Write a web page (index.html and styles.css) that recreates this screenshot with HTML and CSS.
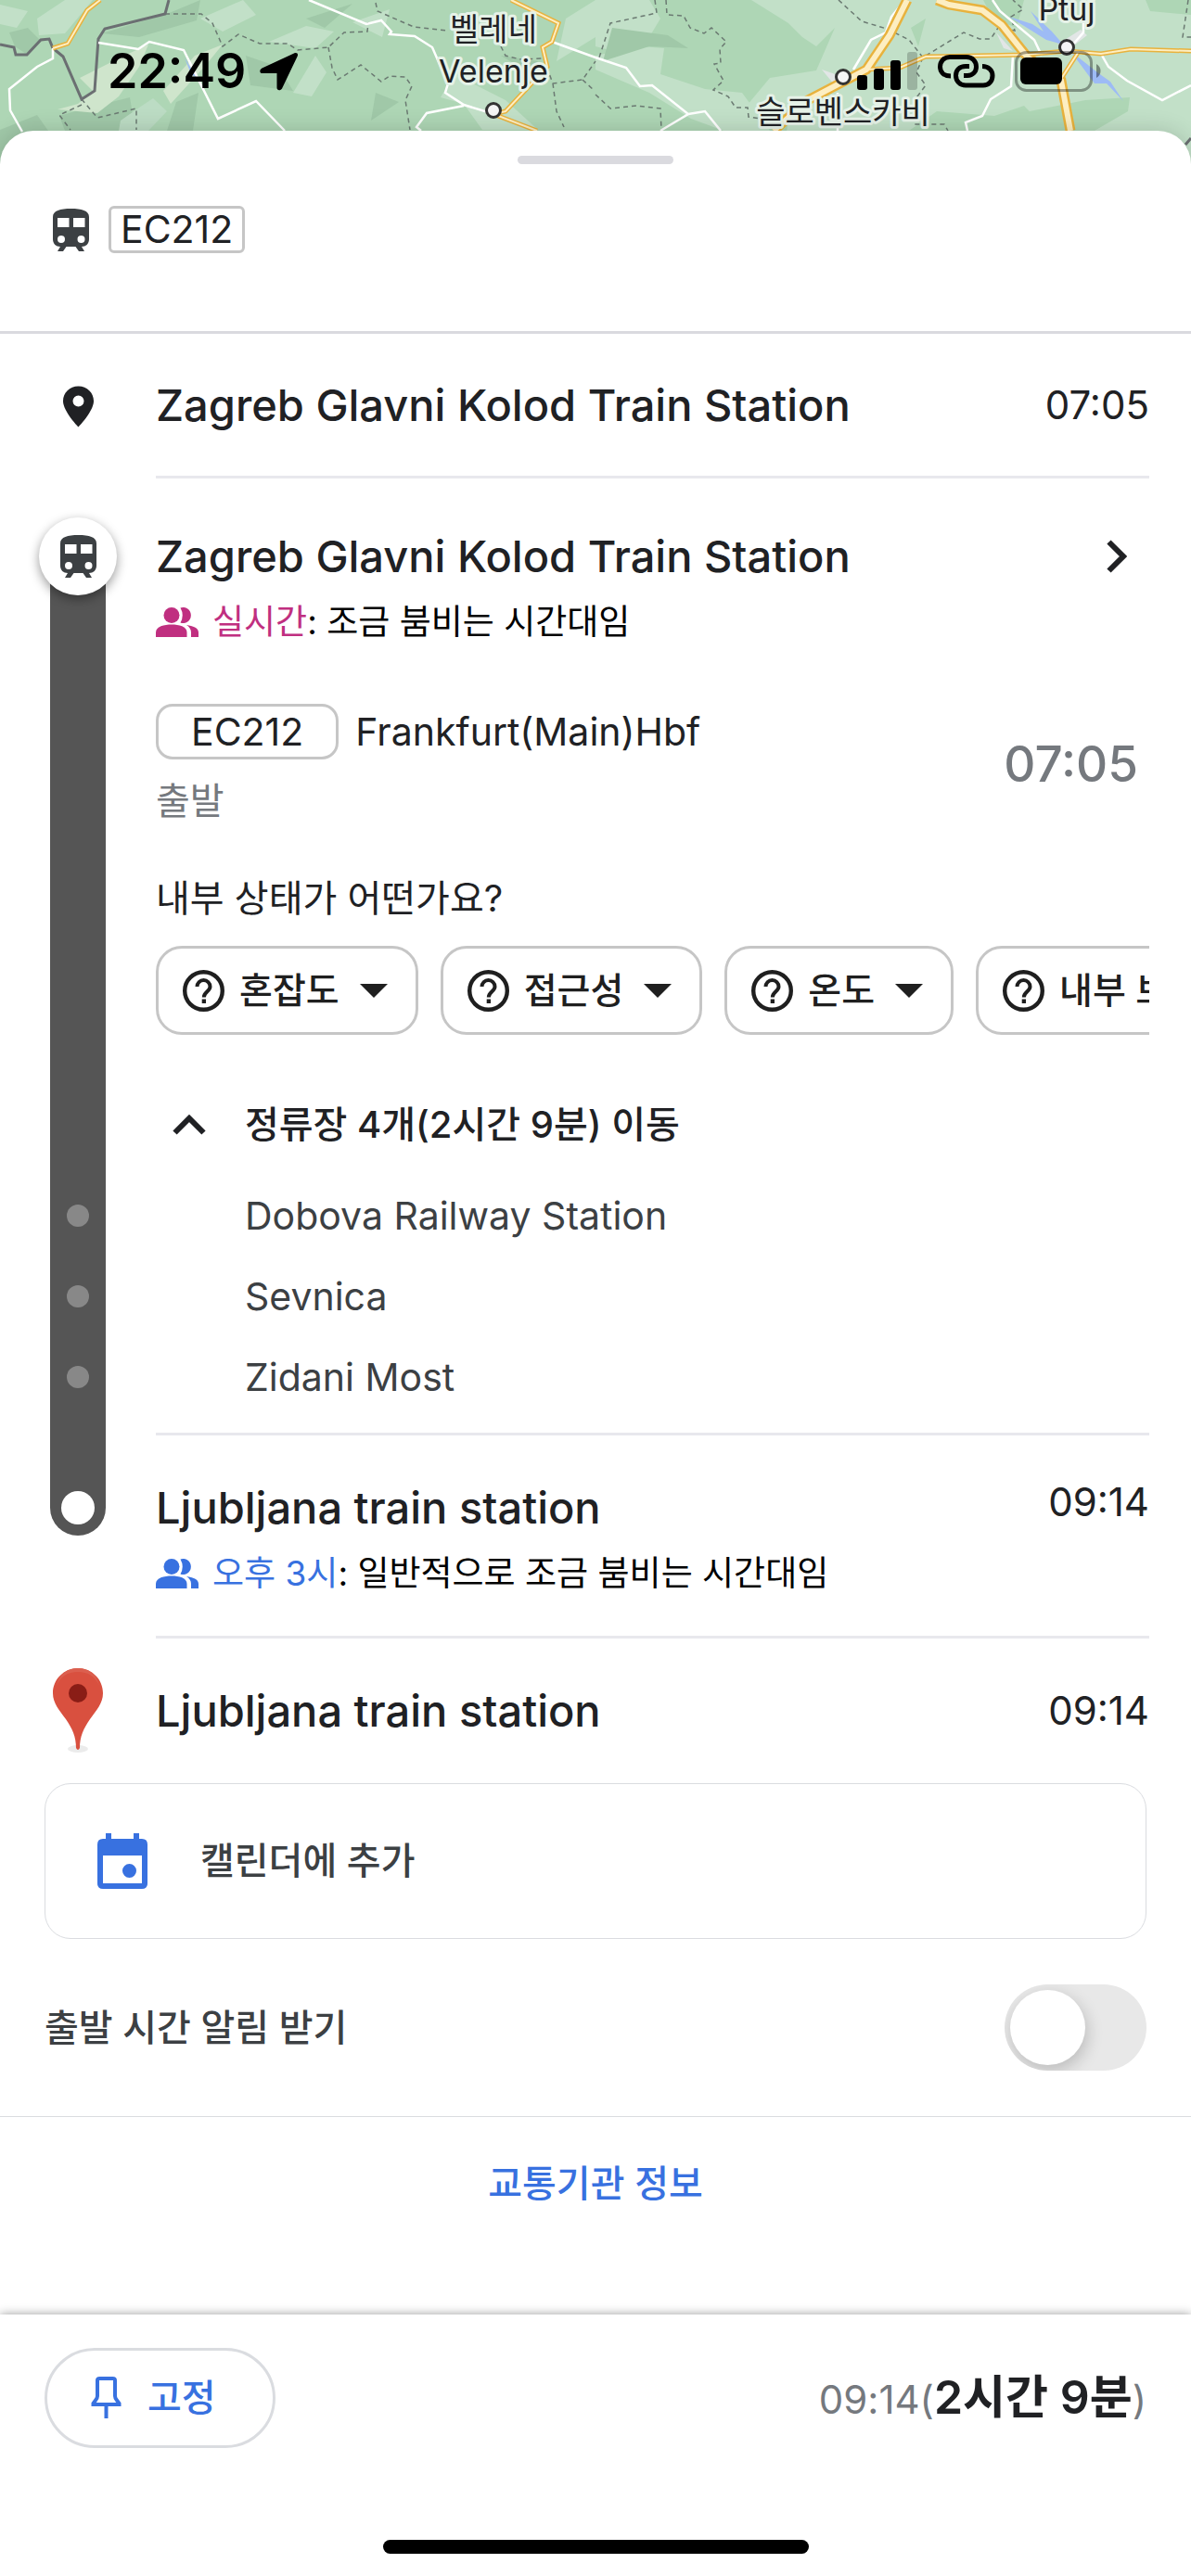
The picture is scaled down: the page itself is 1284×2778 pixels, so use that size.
FILE: index.html
```html
<!DOCTYPE html>
<html lang="ko">
<head>
  <meta charset="UTF-8">
  <meta name="viewport" content="width=device-width, initial-scale=1.0">
  <title>EC212</title>
  <link rel="stylesheet" href="styles.css">
</head>
<body>
  <!-- shared icons -->
  <svg class="sprite" aria-hidden="true">
    <symbol id="train" viewBox="0 0 39 46">
      <path fill-rule="evenodd" d="M19.500 0C8 0 0 2 0 9V33C0 38 3.500 41 8 41L5 46H11L14.500 41H24.500L28 46H34L31 41C35.500 41 39 38 39 33V9C39 2 31 0 19.500 0ZM5 10H17.500V20H5ZM22 10H34.500V20H22ZM9 29A4 4 0 1 1 9 37A4 4 0 1 1 9 29ZM30.500 29A4 4 0 1 1 30.500 37A4 4 0 1 1 30.500 29Z"/>
    </symbol>
    <symbol id="people" viewBox="0 0 46 33">
      <circle cx="17" cy="8.500" r="8.500"/>
      <path d="M0 32V27C0 20.500 9 18.500 17 18.500S33.500 20.500 33.500 27V32Z"/>
      <path d="M26.500 0.500A8.500 8.500 0 1 1 26.500 16.500Q31 8.500 26.500 0.500Z"/>
      <path d="M33 19C40 20 46 22 46 27V32H38V27C38 23.500 36 21 33 19Z"/>
    </symbol>
    <symbol id="help" viewBox="0 0 45 45">
      <circle cx="22.500" cy="22.500" r="20.300" fill="none" stroke="currentColor" stroke-width="4.400"/>
      <path d="M15.500 18A7 7 0 0 1 29.500 18C29.500 23 22.800 23.500 22.800 29.500" fill="none" stroke="currentColor" stroke-width="4"/>
      <rect x="20.700" y="31.500" width="4.300" height="4.500"/>
    </symbol>
  </svg>

  <header class="map">
    <svg class="map-art" viewBox="0 0 1284 190" preserveAspectRatio="xMidYMin slice" aria-hidden="true">
      <rect width="1284" height="190" fill="#aed6b5"/>
      <!-- lowland -->
      <g fill="#c2e0c8">
        <path d="M642 0H700L712 20L700 40L680 60L642 50Z"/>
        <path d="M810 0H1284V190H840L852 118L800 120L830 84L880 76L900 30L880 50L865 40L850 25Z"/>
        <path d="M642 60L690 50L716 52L712 80L760 96L800 100L830 141L780 141L745 128L700 100L642 75Z"/>
        <path d="M490 80L545 108L580 140H520L500 112L475 105Z"/>
        <path d="M0 5L30 12L18 30L0 26ZM40 20L70 0H100L70 36L42 38ZM216 20L262 0L276 16L240 34ZM290 45L330 28L360 34L340 52ZM316 100L340 60L352 78L336 104ZM610 20L642 0V40L600 66ZM380 24L420 10L412 40Z"/>
      </g>
      <g fill="#aed6b5">
        <path d="M1060 0H1104L1096 30L1070 20ZM1235 0H1284V16L1240 12ZM1110 120L1170 108L1218 105L1216 120L1180 141H1100ZM980 141L1010 120L1072 125L1104 114L1130 141ZM982 30L998 20L990 50Z"/>
      </g>
      <g fill="#a0c8a8">
        <path d="M180 15L216 0L212 22L150 40L110 36ZM10 35L30 30L44 44L28 58L16 50ZM88 118L140 105L146 141H70L64 125ZM330 20L380 4L350 30ZM265 60L300 72L316 98L270 92ZM660 30L720 38L742 52L700 50L650 66ZM0 140L40 124L52 141L0 190ZM540 60L580 66L570 78ZM405 100L430 110L400 130ZM190 110L214 100L208 141H180Z"/>
      </g>
      <g fill="#cfe5cc">
        <path d="M86 84L134 60L160 48L150 72L128 104L105 122L62 118L84 112L100 98ZM176 98L210 60L240 48L222 70L184 112Z"/>
        <path d="M150 116L165 106L180 120L160 141H128L130 130Z" fill="#bcdcc4"/>
      </g>
      <g fill="#9dbbf5">
        <path d="M1088 18L1113 26L1146 48L1128 43ZM1111 12L1134 34L1148 50L1130 42ZM1154 55L1183 78L1197 88L1211 109L1193 90L1180 90ZM199 62L212 84L206 80Z"/>
      </g>
      <path d="M886 75L906 82L900 92ZM1140 48L1165 32L1172 38L1154 52ZM1074 35L1092 55L1082 52Z" fill="#e2e6e6"/>
      <!-- admin borders -->
      <g fill="none" stroke="#6b7a72" stroke-width="1.500" stroke-dasharray="5 4">
        <path d="M178 15H217L229 25L240 50L257 37L280 47H310L321 54L354 51L371 35L396 34L397 24"/>
        <path d="M405 3L407 12L446 29L483 33M354 51L358 73L364 86L389 70L411 88L420 82L437 83L444 93L437 108L442 140"/>
        <path d="M88 107L105 127L147 117V140M88 113L64 124L76 140M540 50L545 60L561 64L586 63L596 90L628 86L642 66M596 90L600 120L608 137M628 86L640 97"/>
        <path d="M718 0L719 16L737 17L744 30L759 36L767 30L783 45L776 53L777 68L770 69L780 87L769 97L785 104L793 116H806L807 126L820 128"/>
        <path d="M706 0L708 14L658 25L646 62M642 102L658 117L686 114L712 117L713 140"/>
        <path d="M904 0L929 23L956 31L980 43L995 62L1039 35L1056 42H1068L1076 30L1094 33L1090 18L1103 10L1092 0M995 62L988 78L998 92L986 108V134L1018 134L1022 141M1281 0L1275 40H1284"/>
      </g>
      <path d="M0 48L15 51L17 59H29L44 43L53 42L57 52L68 61L88 107L102 98L106 42L113 31L178 15L182 0M1278 156L1284 149" fill="none" stroke="#6b6f72" stroke-width="3"/>
      <!-- small roads -->
      <g fill="none" stroke="#fff" stroke-width="2.500">
        <path d="M106 46L149 53L161 45L198 54L235 128L276 109L307 141M57 52V63L40 72L10 96L11 119L24 142"/>
        <path d="M333 0L395 26L411 22L422 34L420 37L447 39L466 51L483 90L480 100L500 113L526 121M500 114L460 122L449 137L454 141"/>
        <path d="M595 45L642 62L675 73L690 93L703 92L742 123L712 141M742 123L760 120L777 141"/>
        <path d="M970 7L961 18L955 35L939 43L920 75M903 100V141M1070 0L1078 12L1115 43L1123 60M1092 60L1090 93L1068 107L1059 125L1041 132L1043 141M1187 58L1195 72L1215 87L1253 108L1284 92M1168 20V35L1155 50"/>
      </g>
      <!-- highways: casing, then fill -->
      <g fill="none" stroke="#e8b23d">
        <path stroke-width="5" d="M108 0L94 11L73 47L57 52M551 0L602 25L595 45L585 51L590 72L545 120L532 123L579 141M934 75L970 73L998 61L1105 59L1150 55L1187 58L1219 53L1284 55M1162 57L1144 85"/>
        <path stroke-width="11" d="M978 0L959 38L934 75L871 108L834 141M1010 0L1023 5L1059 11L1080 27L1108 62L1144 87L1154 141"/>
      </g>
      <g fill="none" stroke="#fdeec2">
        <path stroke-width="2" d="M108 0L94 11L73 47L57 52M551 0L602 25L595 45L585 51L590 72L545 120L532 123L579 141M934 75L970 73L998 61L1105 59L1150 55L1187 58L1219 53L1284 55M1162 57L1144 85"/>
        <path stroke-width="6" d="M978 0L959 38L934 75L871 108L834 141M1010 0L1023 5L1059 11L1080 27L1108 62L1144 87L1154 141"/>
      </g>
      <g fill="#f5f5f5" stroke="#333" stroke-width="3">
        <circle cx="532" cy="119" r="7.500"/>
        <circle cx="909" cy="83" r="7.500"/>
        <circle cx="1150" cy="51" r="7.500"/>
      </g>
      <g class="map-label">
        <text x="532" y="44">벨레네</text>
        <text x="532" y="89">Velenje</text>
        <text x="909" y="133">슬로벤스카비</text>
        <text x="1150" y="22">Ptuj</text>
      </g>
    </svg>
    <div class="status-bar">
      <div class="status-left">
        <span class="clock">22:49</span>
        <svg width="42" height="42" viewBox="0 0 42 42"><path d="M37 1.500L2.500 17.500C-0.500 19-0.500 23 3 23H18.500V38.500C18.500 42 22.500 42 24 39.500L40.500 5C42 2 40 0 37 1.500Z"/></svg>
      </div>
      <div class="status-right">
        <svg width="66" height="42" viewBox="0 0 66 42">
          <rect y="25" width="11" height="16" rx="3"/>
          <rect x="18" y="18" width="11" height="23" rx="3"/>
          <rect x="36" y="9" width="11" height="32" rx="3"/>
          <rect x="54" width="11" height="41" rx="3" opacity="0.200"/>
        </svg>
        <svg width="62" height="36" viewBox="0 0 62 36">
          <g fill="none" stroke="#000" stroke-width="5">
            <path d="M14 23C6 23 2.500 18 2.500 13C2.500 7 7 2.500 13 2.500H31C37 2.500 41.500 7 41.500 13C41.500 18 38 22.500 32 22.500H28"/>
            <path d="M48 12.500C55 12.500 59 17 59 22.500C59 28.500 55 33 49 33H30C24 33 19.500 28.500 19.500 22.500C19.500 17 23 12.500 30 12.500H34"/>
          </g>
        </svg>
        <svg width="94" height="44" viewBox="0 0 94 44">
          <rect x="1.500" y="1.500" width="81" height="41" rx="11" fill="none" stroke="#000" stroke-width="3" opacity="0.350"/>
          <rect x="6" y="7" width="45" height="29" rx="6"/>
          <path d="M88 14C94 17 94 26 88 29Z" opacity="0.400"/>
        </svg>
      </div>
    </div>
  </header>

  <main class="sheet">
    <div class="handle"></div>
    <div class="line-header">
      <svg class="icon-train" width="39" height="46"><use href="#train"/></svg>
      <h1 class="line-tag">EC212</h1>
    </div>

    <section class="row">
      <div class="rail-cell">
        <svg width="33" height="45" viewBox="0 0 33 44"><path fill="#202124" fill-rule="evenodd" d="M16.500 0C7 0 0 7 0 16C0 27 16.500 44 16.500 44S33 27 33 16C33 7 26 0 16.500 0ZM16.500 10A6 6 0 1 1 16.500 22A6 6 0 1 1 16.500 10Z"/></svg>
      </div>
      <div class="row-body divided">
        <h2 class="station">Zagreb Glavni Kolod Train Station</h2>
        <time class="time">07:05</time>
      </div>
    </section>

    <section class="leg">
      <div class="rail">
        <div class="badge"><svg class="icon-train" width="39" height="46"><use href="#train"/></svg></div>
        <div class="bar">
          <i class="dot"></i>
          <i class="dot"></i>
          <i class="dot"></i>
          <i class="dot-end"></i>
        </div>
      </div>
      <div class="leg-body">
        <div class="departure divided">
          <a class="station-link" href="#station">
            <h2 class="station">Zagreb Glavni Kolod Train Station</h2>
            <svg width="22" height="36" viewBox="0 0 22 36"><path d="M2.500 2.500L18 18L2.500 33.500" fill="none" stroke="#202124" stroke-width="6"/></svg>
          </a>
          <p class="crowd">
            <svg class="live" width="46" height="33"><use href="#people"/></svg>
            <span><span class="live">실시간</span>: 조금 붐비는 시간대임</span>
          </p>

          <div class="service">
            <div>
              <div class="service-name">
                <span class="service-tag">EC212</span>
                <span>Frankfurt(Main)Hbf</span>
              </div>
              <p class="service-note">출발</p>
            </div>
            <time class="service-time">07:05</time>
          </div>

          <p class="question">내부 상태가 어떤가요?</p>
          <div class="chips">
            <button class="chip"><svg width="45" height="45"><use href="#help"/></svg>혼잡도<i class="caret"></i></button>
            <button class="chip"><svg width="45" height="45"><use href="#help"/></svg>접근성<i class="caret"></i></button>
            <button class="chip"><svg width="45" height="45"><use href="#help"/></svg>온도<i class="caret"></i></button>
            <button class="chip"><svg width="45" height="45"><use href="#help"/></svg>내부 보안<i class="caret"></i></button>
          </div>

          <button class="stops-toggle">
            <svg width="36" height="22" viewBox="0 0 36 22"><path d="M2.500 19.500L18 4L33.500 19.500" fill="none" stroke="#202124" stroke-width="6"/></svg>
            정류장 4개(2시간 9분) 이동
          </button>
          <ul class="stops">
            <li>Dobova Railway Station</li>
            <li>Sevnica</li>
            <li>Zidani Most</li>
          </ul>
        </div>

        <div class="arrival divided">
          <div class="arrival-head">
            <h2 class="station">Ljubljana train station</h2>
            <time class="time">09:14</time>
          </div>
          <p class="crowd">
            <svg class="usual" width="46" height="33"><use href="#people"/></svg>
            <span><span class="usual">오후 3시</span>: 일반적으로 조금 붐비는 시간대임</span>
          </p>
        </div>
      </div>
    </section>

    <section class="row">
      <div class="rail-cell">
        <svg width="54" height="92" viewBox="0 0 54 92">
          <ellipse cx="27" cy="87" rx="11" ry="4" fill="#000" opacity="0.080"/>
          <path d="M27 0C12 0 0 12 0 27C0 38 7 45 14 55C21 65 25 74 25 86Q27 90 29 86C29 74 33 65 40 55C47 45 54 38 54 27C54 12 42 0 27 0Z" fill="#d9503f"/>
          <path d="M4 19C8 9 16 4 27 4S46 9 50 19C47 6 38 0 27 0S7 6 4 19Z" fill="#db5f4f"/>
          <circle cx="27" cy="27" r="10" fill="#8a1d16"/>
        </svg>
      </div>
      <div class="row-body">
        <h2 class="station">Ljubljana train station</h2>
        <time class="time">09:14</time>
      </div>
    </section>

    <button class="calendar">
      <svg width="54" height="60" viewBox="0 0 54 60"><path fill="#3871e0" fill-rule="evenodd" d="M9 0H15V6H39V0H45V6H48Q54 6 54 12V54Q54 60 48 60H6Q0 60 0 54V12Q0 6 6 6H9ZM6 24V54H48V24ZM34.500 33A7.500 7.500 0 1 1 34.500 48A7.500 7.500 0 1 1 34.500 33Z"/></svg>
      캘린더에 추가
    </button>

    <div class="reminder">
      <label for="reminder">출발 시간 알림 받기</label>
      <input class="switch" type="checkbox" id="reminder">
    </div>

    <div class="agency">
      <a href="#agency">교통기관 정보</a>
    </div>
  </main>

  <footer class="footer">
    <div class="footer-row">
      <button class="pin">
        <svg width="33" height="46" viewBox="0 0 33 46"><path fill="none" stroke="#3871e0" stroke-width="4" d="M7 4Q7 2 9.500 2H23.500Q26 2 26 4V21Q26 23 28 25.500L30.500 29V30H2.500V29L5 25.500Q7 23 7 21ZM16.500 30V45"/></svg>
        고정
      </button>
      <p class="eta">09:14(<strong>2시간 9분</strong>)</p>
    </div>
    <div class="home-indicator"></div>
  </footer>
</body>
</html>
```
FILE: styles.css
```css
* {
  box-sizing: border-box;
}
body {
  margin: 0;
  min-height: 100vh;
  display: flex;
  flex-direction: column;
  background-color: #fff;
  color: #202124;
  font-family: Inter, "Noto Sans CJK KR", sans-serif;
  font-size: 40px;
  line-height: 48px;
}
h1, h2, p, ul {
  margin: 0;
  padding: 0;
  font-weight: 400;
}
button {
  font: inherit;
  color: inherit;
  background: none;
  border: none;
  padding: 0;
  cursor: pointer;
}
a {
  color: inherit;
  text-decoration: none;
}
svg {
  flex: none;
  fill: currentColor;
}
.sprite {
  position: absolute;
  width: 0;
  height: 0;
}

/* map and status bar */
.map {
  position: relative;
  height: 190px;
  overflow: hidden;
}
.map-art {
  position: absolute;
  top: 0;
  left: 0;
  width: 100%;
  height: 100%;
}
.map-label {
  font-size: 34px;
  text-anchor: middle;
  fill: #202124;
  stroke: #e6f2e8;
  stroke-width: 6px;
  stroke-linejoin: round;
  paint-order: stroke;
}
.status-bar {
  position: relative;
  display: flex;
  justify-content: space-between;
  align-items: center;
  padding: 47px 96px 0 116px;
  color: #000;
}
.status-left, .status-right {
  display: flex;
  align-items: center;
  gap: 15px;
}
.status-right {
  gap: 21px;
}
.clock {
  font-size: 52px;
  font-weight: 600;
  line-height: 60px;
}

/* sheet */
.sheet {
  position: relative;
  flex: 1;
  margin-top: -49px;
  padding-top: 27px;
  background-color: #fff;
  border-radius: 36px 36px 0 0;
  box-shadow: 0 0 24px rgba(0, 0, 0, 0.16);
}
.handle {
  width: 168px;
  height: 9px;
  margin: 0 auto;
  border-radius: 5px;
  background-color: #dadadf;
}
.line-header {
  display: flex;
  align-items: center;
  gap: 21px;
  padding: 45px 57px 84px;
  border-bottom: 3px solid #dadadf;
}
.icon-train {
  color: #3c4043;
}
.line-tag {
  padding: 0 10px;
  border: 3px solid #c6c6c6;
  border-radius: 6px;
  font-size: 41px;
  line-height: 45px;
}

.row, .leg {
  display: grid;
  grid-template-columns: 168px 1fr;
  padding-right: 45px;
}
.rail-cell {
  display: flex;
  align-items: center;
  justify-content: center;
}
.row-body {
  display: flex;
  align-items: center;
  justify-content: space-between;
  min-height: 156px;
}
.divided {
  border-bottom: 3px solid #e8e8ed;
}
.station {
  font-size: 47px;
  font-weight: 500;
  line-height: 60px;
  white-space: nowrap;
}
.time {
  font-size: 42px;
}

/* train leg */
.rail {
  display: flex;
  flex-direction: column;
  align-items: center;
  padding: 42px 0 111px;
}
.badge {
  display: flex;
  align-items: center;
  justify-content: center;
  width: 84px;
  height: 84px;
  border-radius: 50%;
  background-color: #fff;
  box-shadow: 0 4px 12px rgba(0, 0, 0, 0.4);
  z-index: 1;
}
.bar {
  flex: 1;
  display: flex;
  flex-direction: column;
  justify-content: flex-end;
  align-items: center;
  gap: 63px;
  width: 60px;
  margin-top: -42px;
  padding-bottom: 12px;
  border-radius: 0 0 30px 30px;
  background-color: #555;
}
.dot {
  width: 24px;
  height: 24px;
  border-radius: 50%;
  background-color: #888;
}
.dot-end {
  width: 36px;
  height: 36px;
  margin-top: 48px;
  border-radius: 50%;
  background-color: #fff;
}
.leg-body {
  min-width: 0;
}
.departure {
  padding: 54px 0 16px;
}
.station-link {
  display: flex;
  align-items: center;
  justify-content: space-between;
  padding-right: 24px;
}
.crowd {
  display: flex;
  align-items: center;
  gap: 15px;
  margin-top: 17px;
  color: #000;
  font-size: 37px;
}
.live {
  color: #c02f80;
}
.usual {
  color: #3871e0;
}
.service {
  display: flex;
  align-items: center;
  justify-content: space-between;
  margin-top: 64px;
  padding-right: 12px;
}
.service-name {
  display: flex;
  align-items: center;
  gap: 18px;
  font-size: 41px;
}
.service-tag {
  padding: 0 35px;
  border: 3px solid #c6c6c6;
  border-radius: 18px;
  line-height: 54px;
}
.service-note {
  margin-top: 21px;
  color: #75797e;
}
.service-time {
  color: #75797e;
  font-size: 53px;
  font-weight: 500;
  line-height: 60px;
}
.question {
  margin-top: 57px;
}
.chips {
  display: flex;
  gap: 24px;
  margin-top: 27px;
  overflow: hidden;
}
.chip {
  flex: none;
  display: flex;
  align-items: center;
  gap: 16px;
  height: 96px;
  padding: 0 30px 0 26px;
  border: 3px solid #c6c6c6;
  border-radius: 28px;
  color: #1f1f1f;
  font-size: 39px;
  font-weight: 500;
  white-space: nowrap;
}
.caret {
  margin-left: 6px;
  border: 15px solid transparent;
  border-top-color: #1f1f1f;
  border-bottom: none;
}
.stops-toggle {
  display: flex;
  align-items: center;
  gap: 42px;
  margin-top: 73px;
  padding-left: 18px;
  font-weight: 500;
}
.stops {
  margin-top: 31px;
  padding-left: 96px;
  list-style: none;
  color: #3c4043;
  font-size: 41px;
  line-height: 87px;
}
.arrival {
  padding: 48px 0 43px;
}
.arrival-head {
  display: flex;
  justify-content: space-between;
}

/* actions */
.calendar {
  display: flex;
  align-items: center;
  gap: 57px;
  width: calc(100% - 96px);
  height: 168px;
  margin: 0 48px;
  padding: 0 56px;
  border: 1px solid #dadce0;
  border-radius: 28px;
  color: #3c4043;
  font-weight: 500;
}
.reminder {
  display: flex;
  align-items: center;
  justify-content: space-between;
  height: 192px;
  padding: 0 48px;
  border-bottom: 1px solid #dadce0;
  color: #3c4043;
  font-weight: 500;
}
.switch {
  appearance: none;
  width: 153px;
  height: 93px;
  margin: 0;
  padding: 6px;
  border-radius: 47px;
  background-color: #e8e8e8;
  overflow: hidden;
  cursor: pointer;
}
.switch::before {
  content: "";
  display: block;
  width: 81px;
  height: 81px;
  border-radius: 50%;
  background-color: #fff;
  box-shadow: 2px 6px 18px rgba(0, 0, 0, 0.2);
}
.switch:checked {
  background-color: #3871e0;
}
.switch:checked::before {
  margin-left: auto;
}
.agency {
  padding: 48px 0 117px;
  text-align: center;
  color: #3871e0;
  font-weight: 500;
}

/* footer */
.footer {
  position: relative;
  padding: 36px 48px 24px;
  background-color: #fff;
  box-shadow: 0 0 10px rgba(0, 0, 0, 0.4);
}
.footer-row {
  display: flex;
  align-items: center;
  justify-content: space-between;
}
.pin {
  display: flex;
  align-items: center;
  gap: 28px;
  height: 108px;
  padding: 0 61px 0 47px;
  border: 3px solid #dadce0;
  border-radius: 54px;
  color: #3871e0;
  font-weight: 500;
}
.eta {
  color: #75797e;
  font-size: 42px;
}
.eta strong {
  color: #202124;
  font-size: 50px;
  font-weight: 600;
}
.home-indicator {
  width: 459px;
  height: 15px;
  margin: 99px auto 0;
  border-radius: 8px;
  background-color: #000;
}
```
